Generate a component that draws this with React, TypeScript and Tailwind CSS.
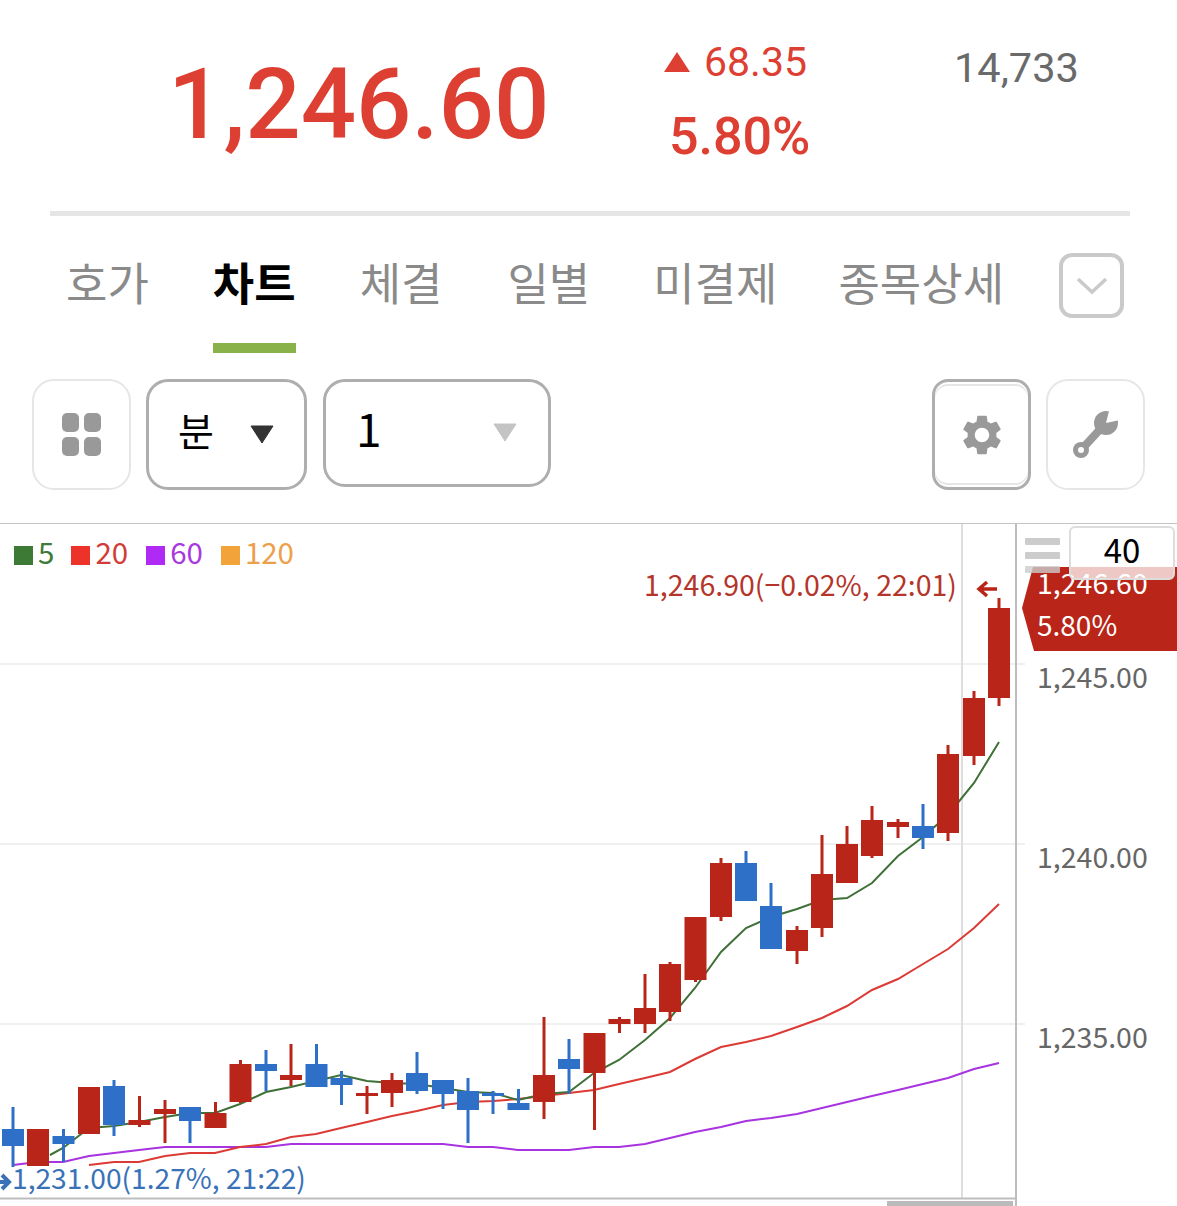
import React from "react"
import { MdSettings } from "react-icons/md"

const RED = "#b92519"
const BLUE = "#2e6fc7"

// x, wick top, wick bottom, body top, body bottom, up?
const candles: [number, number, number, number, number, boolean][] = [
  [13, 1107, 1167, 1129, 1146, false],
  [38, 1129, 1166, 1129, 1166, true],
  [63.5, 1129, 1162, 1136, 1144, false],
  [89, 1087, 1134, 1087, 1134, true],
  [114, 1080, 1136, 1086, 1125, false],
  [139.5, 1096, 1127, 1120, 1125, true],
  [165, 1100, 1143, 1109, 1114, true],
  [190, 1107, 1143, 1107, 1121, false],
  [215.5, 1102, 1128, 1113, 1128, true],
  [240.5, 1060, 1103, 1064, 1102, true],
  [266, 1050, 1091, 1064, 1071, false],
  [291, 1044, 1086, 1075, 1080, true],
  [316.5, 1044, 1087, 1064, 1087, false],
  [341.5, 1071, 1105, 1078, 1085, false],
  [367, 1086, 1114, 1093, 1096, true],
  [392, 1073, 1107, 1080, 1093, true],
  [417, 1052, 1094, 1073, 1091, false],
  [443, 1080, 1109, 1080, 1094, false],
  [468, 1078, 1143, 1091, 1110, false],
  [493, 1091, 1114, 1093, 1096, false],
  [518.5, 1089, 1110, 1103, 1110, false],
  [544, 1017, 1119, 1075, 1102, true],
  [569, 1039, 1094, 1059, 1069, false],
  [594.5, 1033, 1130, 1033, 1073, true],
  [619.5, 1017, 1033, 1019, 1024, true],
  [645, 974, 1033, 1008, 1024, true],
  [670, 962, 1021, 964, 1012, true],
  [695.5, 917, 982, 917, 980, true],
  [721, 858, 921, 863, 917, true],
  [746, 851, 901, 863, 901, false],
  [771, 883, 949, 906, 949, false],
  [797, 926, 964, 930, 951, true],
  [822, 835, 937, 874, 928, true],
  [847, 826, 883, 844, 883, true],
  [872, 806, 858, 820, 856, true],
  [898, 819, 838, 822, 827, true],
  [923, 804, 849, 826, 838, false],
  [948, 745, 841, 754, 833, true],
  [974, 691, 765, 698, 756, true],
  [999, 598, 706, 608, 698, true],
]

const ma5 =
  "50,1155 63,1148 89,1128 114,1126 139,1122 165,1117 190,1113 215,1113 240,1104 266,1092 291,1087 316,1081 341,1075 367,1081 392,1083 417,1084 443,1088 468,1092 493,1093 518,1100 544,1094 569,1092 594,1073 619,1060 645,1040 670,1018 695,988 721,952 746,928 771,917 797,909 822,900 847,898 872,883 898,856 923,837 948,815 974,783 999,742"
const ma20 =
  "89,1165 114,1162 139,1162 165,1156 190,1153 215,1153 240,1147 266,1144 291,1137 316,1134 341,1128 367,1122 392,1116 417,1111 443,1105 468,1102 493,1101 518,1099 544,1096 569,1093 594,1090 619,1084 645,1078 670,1072 695,1059 721,1047 746,1042 771,1036 797,1027 822,1018 847,1006 872,990 898,979 923,964 948,949 974,928 999,904"
const ma60 =
  "13,1165 38,1162 63,1162 89,1156 114,1153 139,1150 165,1147 190,1147 215,1147 240,1147 266,1147 291,1144 316,1144 341,1144 367,1144 392,1144 417,1144 443,1144 468,1147 493,1147 518,1150 544,1150 569,1150 594,1147 619,1147 645,1144 670,1138 695,1132 721,1127 746,1121 771,1118 797,1114 822,1108 847,1102 872,1096 898,1090 923,1084 948,1078 974,1069 999,1063"

const tabs = [
  { label: "호가", gap: "mr-[64px]" },
  { label: "차트", gap: "mr-[64px]", active: true },
  { label: "체결", gap: "mr-[65px]" },
  { label: "일별", gap: "mr-[63px]" },
  { label: "미결제", gap: "mr-[61px]" },
  { label: "종목상세", gap: "mr-[55px]" },
]

const legend = [
  { label: "5", box: "bg-[#3d7a35]", text: "text-[#3f7a3a]", gap: "mr-[17px]" },
  { label: "20", box: "bg-[#ec3229]", text: "text-[#d23c38]", gap: "mr-[18px]" },
  { label: "60", box: "bg-[#b02af5]", text: "text-[#a83ae0]", gap: "mr-[18px]" },
  { label: "120", box: "bg-[#f2a33a]", text: "text-[#eda04a]", gap: "mr-0" },
]

const Wrench = () => (
  <svg width={48} height={52} viewBox="0 0 48 52" fill="#999999">
    <circle cx={9} cy={41} r={8} />
    <path d="M9 41 L33 15" stroke="#999999" strokeWidth={8} />
    <circle cx={34} cy={14} r={12} />
    <path d="M34 14 L38 -2 L52 10 Z" fill="#ffffff" />
    <circle cx={9} cy={41} r={3} fill="#ffffff" />
  </svg>
)

const Chart = () => (
  <svg
    className="absolute inset-0"
    width={1177}
    height={682}
    viewBox="0 524 1177 682"
  >
    <g stroke="#f0f0f0" strokeWidth={2}>
      <line x1={0} y1={664} x2={1025} y2={664} />
      <line x1={0} y1={844} x2={1025} y2={844} />
      <line x1={0} y1={1024} x2={1025} y2={1024} />
    </g>
    <line x1={962} y1={524} x2={962} y2={1198} stroke="#dedede" strokeWidth={2} />
    <line x1={1016} y1={524} x2={1016} y2={1206} stroke="#bdbdbd" strokeWidth={2} />
    <line x1={0} y1={1198.5} x2={1016} y2={1198.5} stroke="#bdbdbd" strokeWidth={2} />
    <rect x={887} y={1201} width={126} height={5} fill="#bbbbbb" />
    <polyline points={ma60} fill="none" stroke="#a833e0" strokeWidth={2} />
    <polyline points={ma20} fill="none" stroke="#dc3a35" strokeWidth={2} />
    <polyline points={ma5} fill="none" stroke="#3f7037" strokeWidth={2} />
    {candles.map(([x, wt, wb, bt, bb, up]) => (
      <g key={x} fill={up ? RED : BLUE}>
        <rect x={x - 1.5} y={wt} width={3} height={wb - wt} />
        <rect x={x - 11} y={bt} width={22} height={bb - bt} />
      </g>
    ))}
    <path d="M1022 608 L1033 567 H1177 V651 H1034 Z" fill={RED} />
    <path
      d="M997 589 H980 M987 582 L979 589 L987 596"
      fill="none"
      stroke={RED}
      strokeWidth={3.5}
    />
    <path
      d="M-8 1182 H7 M2 1175 L9 1182 L2 1189"
      fill="none"
      stroke="#3a72b8"
      strokeWidth={4}
    />
  </svg>
)

const App = () => {
  return (
    <div className="w-[1177px] h-[1206px] overflow-hidden bg-white flex flex-col font-['Roboto','Noto_Sans_CJK_KR',sans-serif]">
      <header className="h-[211px] shrink-0 flex items-start pl-[168px]">
        <div className="mt-[41px] w-[437px] text-[97.5px] leading-[128px] font-medium text-[#dd4032]">
          1,246.60
        </div>
        <div className="w-[205px] mt-[36px] flex flex-col">
          <div className="flex items-center h-[52px]">
            <svg width={28} height={22} viewBox="0 0 28 22" className="ml-[58px] mr-[13px]">
              <path d="M14 1 L27 21 H1 Z" fill="#dd4032" />
            </svg>
            <span className="text-[41px] leading-[52px] text-[#dd4032]">68.35</span>
          </div>
          <div className="mt-[22px] ml-[64px] text-[52px] leading-[54px] font-medium text-[#dd4032]">
            5.80%
          </div>
        </div>
        <div className="mt-[42px] ml-[144px] text-[41.5px] leading-[52px] text-[#6a6a6a]">14,733</div>
      </header>

      <div className="ml-[50px] mr-[47px] h-[5px] shrink-0 bg-[#e5e5e5]" />

      <nav className="h-[137px] shrink-0 flex items-start pl-[66px] font-['Noto_Sans_CJK_KR',sans-serif]">
        {tabs.map((t) => (
          <div
            key={t.label}
            className={[
              "relative h-[137px] pt-[35px] text-[45px] leading-[62px]",
              t.gap,
              t.active ? "font-bold text-black" : "text-[#8a8a8a]",
            ].join(" ")}
          >
            {t.label}
            {t.active && <span className="absolute left-0 right-0 bottom-0 h-[10px] bg-[#8ab24b]" />}
          </div>
        ))}
        <div className="mt-[37px] w-[65px] h-[65px] rounded-[13px] border-[4px] border-[#cacaca] flex items-center justify-center">
          <svg width={32} height={20} viewBox="0 0 32 20" fill="none">
            <path d="M2 3 L16 16 L30 3" stroke="#cacaca" strokeWidth={3.5} />
          </svg>
        </div>
      </nav>

      <div className="h-[170px] shrink-0 pt-[26px] pl-[32px] pr-[32px] flex items-start font-['Noto_Sans_CJK_KR',sans-serif]">
        <button className="w-[99px] h-[111px] rounded-[22px] border-[2px] border-[#e6e6e6] flex items-center justify-center">
          <span className="grid grid-cols-2 gap-[5px]">
            <i className="block w-[17px] h-[19px] rounded-[5px] bg-[#999999]" />
            <i className="block w-[17px] h-[19px] rounded-[5px] bg-[#999999]" />
            <i className="block w-[17px] h-[19px] rounded-[5px] bg-[#999999]" />
            <i className="block w-[17px] h-[19px] rounded-[5px] bg-[#999999]" />
          </span>
        </button>
        <button className="ml-[15px] w-[161px] h-[111px] rounded-[22px] border-[3px] border-[#aeaeae] flex items-start pl-[29px] pt-[17px]">
          <span className="text-[39px] leading-[60px] text-black">분</span>
          <svg width={24} height={19} viewBox="0 0 24 19" className="ml-[36px] mt-[26px]">
            <path d="M1 1 H23 L12 18 Z" fill="#333333" stroke="#333333" strokeLinejoin="round" />
          </svg>
        </button>
        <button className="ml-[16px] w-[228px] h-[108px] rounded-[22px] border-[3px] border-[#aeaeae] flex items-start pl-[30px] pt-[15px]">
          <span className="text-[46px] leading-[60px] text-black">1</span>
          <svg width={24} height={19} viewBox="0 0 24 19" className="ml-[111px] mt-[26px]">
            <path d="M1 1 H23 L12 18 Z" fill="#c4c4c4" stroke="#c4c4c4" strokeLinejoin="round" />
          </svg>
        </button>
        <button className="ml-auto w-[99px] h-[111px] rounded-[16px] border-[3px] border-[#aeaeae] flex items-center justify-center shadow-[inset_0_2px_0_#fff,inset_0_4px_0_#e6e6e6,inset_0_-2px_0_#fff,inset_0_-4px_0_#e6e6e6]">
          <MdSettings size={48} color="#999999" />
        </button>
        <button className="ml-[15px] w-[99px] h-[111px] rounded-[22px] border-[2px] border-[#e6e6e6] flex items-center justify-center">
          <Wrench />
        </button>
      </div>

      <section className="relative flex-1 border-t border-[#c4c4c4] font-['Noto_Sans_CJK_KR',sans-serif]">
        <Chart />

        <div className="absolute left-[14px] top-[6px] flex items-center text-[29.5px] leading-[42px]">
          {legend.map((l) => (
            <div key={l.label} className={`flex items-center ${l.gap} ${l.text}`}>
              <span className={`w-[19px] h-[19px] mr-[5px] mt-[8px] ${l.box}`} />
              {l.label}
            </div>
          ))}
        </div>

        <div className="absolute right-[220px] top-[40px] text-[28.5px] leading-[40px] text-[#b5352a] whitespace-nowrap">
          1,246.90(−0.02%, 22:01)
        </div>
        <div className="absolute left-[12px] top-[632px] text-[28.2px] leading-[42px] text-[#3a72b8] whitespace-nowrap">
          1,231.00(1.27%, 21:22)
        </div>

        {/* price axis */}
        <div className="absolute left-[1037px] top-[37px] text-[28.5px] leading-[42px] text-white">1,246.60</div>
        <div className="absolute left-[1037px] top-[79px] text-[28px] leading-[42px] text-white">5.80%</div>
        <div className="absolute left-[1037px] top-[131px] text-[28.5px] leading-[42px] text-[#666666]">1,245.00</div>
        <div className="absolute left-[1037px] top-[311px] text-[28.5px] leading-[42px] text-[#666666]">1,240.00</div>
        <div className="absolute left-[1037px] top-[491px] text-[28.5px] leading-[42px] text-[#666666]">1,235.00</div>

        <div className="absolute left-[1025px] top-[14px] w-[35px] flex flex-col gap-[7px]">
          <span className="h-[7px] rounded-[1px] bg-[#cccccc]" />
          <span className="h-[7px] rounded-[1px] bg-[#cccccc]" />
          <span className="h-[7px] rounded-[1px] bg-[#cccccc]/80" />
        </div>
        <div className="absolute left-[1069px] top-[2px] w-[106px] h-[54px] pb-[6px] rounded-[6px] border-[2px] border-[#dddddd] bg-white/75 flex items-center justify-center text-[33px] text-black">
          40
        </div>
      </section>
    </div>
  )
}

export default App
